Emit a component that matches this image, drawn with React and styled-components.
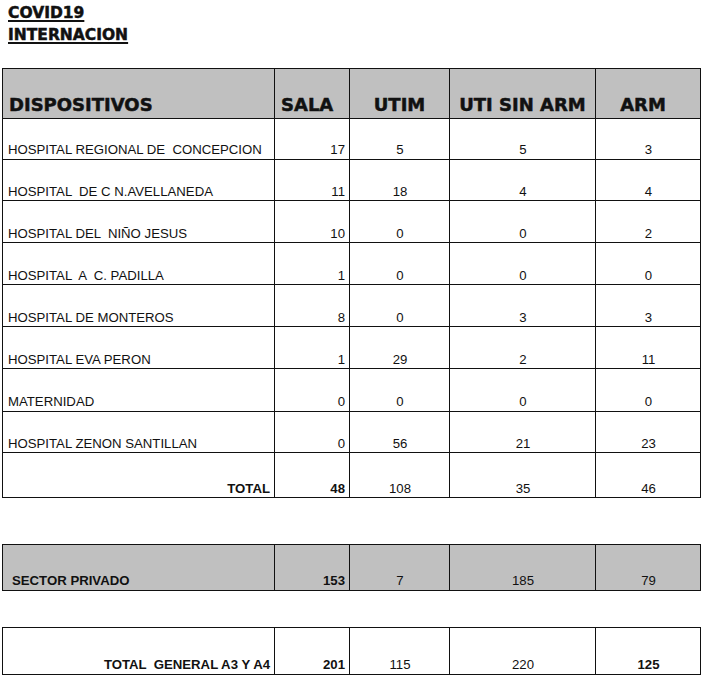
import React from "react";
import styled, { createGlobalStyle } from "styled-components";

const Global = createGlobalStyle`
  html, body { margin: 0; padding: 0; background: #fff; }
  body { font-family: "Liberation Sans", Arial, sans-serif; color: #111; }
`;

const Page = styled.div`
  width: 703px;
  height: 675px;
  overflow: hidden;
  padding: 0 0 0 2px;
  box-sizing: border-box;
`;

const TitleBlock = styled.div`
  padding: 2px 0 0 6px;
  height: 68px;
  box-sizing: border-box;
`;

const Title = styled.div`
  font-family: "DejaVu Sans", sans-serif;
  font-weight: 700;
  font-size: 15.5px;
  line-height: 22px;
  text-decoration: underline;
  text-decoration-thickness: 2px;
  text-underline-offset: 2px;
  -webkit-text-stroke: 0.5px #111;
  color: #111;
`;

const Sheet = styled.table`
  border-collapse: collapse;
  table-layout: fixed;
  width: 698px;
  margin-top: ${(p) => p.$gap || 0}px;
  background: ${(p) => (p.$shade ? "#c0c0c0" : "#fff")};
  td, th { border: 1px solid #111; }
`;

const Row = styled.tr`
  height: ${(p) => p.$h}px;
`;

const HeadCell = styled.th`
  background: #c0c0c0;
  font-family: "DejaVu Sans", sans-serif;
  font-weight: 700;
  font-size: 18px;
  line-height: 18px;
  vertical-align: bottom;
  padding: 0 ${(p) => p.$pr || 0}px 4px ${(p) => p.$pl || 0}px;
  text-align: ${(p) => p.$align || "center"};
  -webkit-text-stroke: 0.5px #111;
  color: #111;
  white-space: nowrap;
`;

const Cell = styled.td`
  font-family: "Liberation Sans", Arial, sans-serif;
  font-size: 13.2px;
  line-height: 15px;
  font-weight: ${(p) => (p.$bold ? 700 : 400)};
  vertical-align: bottom;
  text-align: ${(p) => p.$align || "center"};
  padding: 0 ${(p) => p.$pr ?? 4}px ${(p) => p.$pb ?? 1.5}px ${(p) => p.$pl ?? 5}px;
  white-space: pre;
  color: #111;
`;

const Cols = () => (
  <colgroup>
    <col style={{ width: 272 }} />
    <col style={{ width: 75 }} />
    <col style={{ width: 100 }} />
    <col style={{ width: 146 }} />
    <col style={{ width: 105 }} />
  </colgroup>
);

const rows = [
  ["HOSPITAL REGIONAL DE  CONCEPCION", 17, 5, 5, 3, 41],
  ["HOSPITAL  DE C N.AVELLANEDA", 11, 18, 4, 4, 41.5],
  ["HOSPITAL DEL  NIÑO JESUS", 10, 0, 0, 2, 42],
  ["HOSPITAL  A  C. PADILLA", 1, 0, 0, 0, 42],
  ["HOSPITAL DE MONTEROS", 8, 0, 3, 3, 42],
  ["HOSPITAL EVA PERON", 1, 29, 2, 11, 42],
  ["MATERNIDAD", 0, 0, 0, 0, 42.5],
  ["HOSPITAL ZENON SANTILLAN", 0, 56, 21, 23, 41.8],
];

export default function App() {
  return (
    <Page>
      <Global />
      <TitleBlock>
        <Title>COVID19</Title>
        <Title>INTERNACION</Title>
      </TitleBlock>

      <Sheet>
        <Cols />
        <tbody>
          <Row $h={49.5}>
            <HeadCell $align="left" $pl={6}>DISPOSITIVOS</HeadCell>
            <HeadCell $align="left" $pl={6}>SALA</HeadCell>
            <HeadCell>UTIM</HeadCell>
            <HeadCell>UTI SIN ARM</HeadCell>
            <HeadCell $pr={10}>ARM</HeadCell>
          </Row>
          {rows.map(([name, sala, utim, uti, arm, h]) => (
            <Row key={name} $h={h}>
              <Cell $align="left">{name}</Cell>
              <Cell $align="right">{sala}</Cell>
              <Cell>{utim}</Cell>
              <Cell>{uti}</Cell>
              <Cell>{arm}</Cell>
            </Row>
          ))}
          <Row $h={44.4}>
            <Cell $align="right" $bold $pb={0.5}>TOTAL</Cell>
            <Cell $align="right" $bold $pb={0.5}>48</Cell>
            <Cell $pb={0.5}>108</Cell>
            <Cell $pb={0.5}>35</Cell>
            <Cell $pb={0.5}>46</Cell>
          </Row>
        </tbody>
      </Sheet>

      <Sheet $shade $gap={46}>
        <Cols />
        <tbody>
          <Row $h={46}>
            <Cell $align="left" $bold $pl={9} $pb={1.4}>SECTOR PRIVADO</Cell>
            <Cell $align="right" $bold $pb={1.4}>153</Cell>
            <Cell $pb={1.4}>7</Cell>
            <Cell $pb={1.4}>185</Cell>
            <Cell $pb={1.4}>79</Cell>
          </Row>
        </tbody>
      </Sheet>

      <Sheet $gap={36}>
        <Cols />
        <tbody>
          <Row $h={47}>
            <Cell $align="right" $bold $pb={2}>TOTAL  GENERAL A3 Y A4</Cell>
            <Cell $align="right" $bold $pb={2}>201</Cell>
            <Cell $pb={2}>115</Cell>
            <Cell $pb={2}>220</Cell>
            <Cell $bold $pb={2}>125</Cell>
          </Row>
        </tbody>
      </Sheet>
    </Page>
  );
}
